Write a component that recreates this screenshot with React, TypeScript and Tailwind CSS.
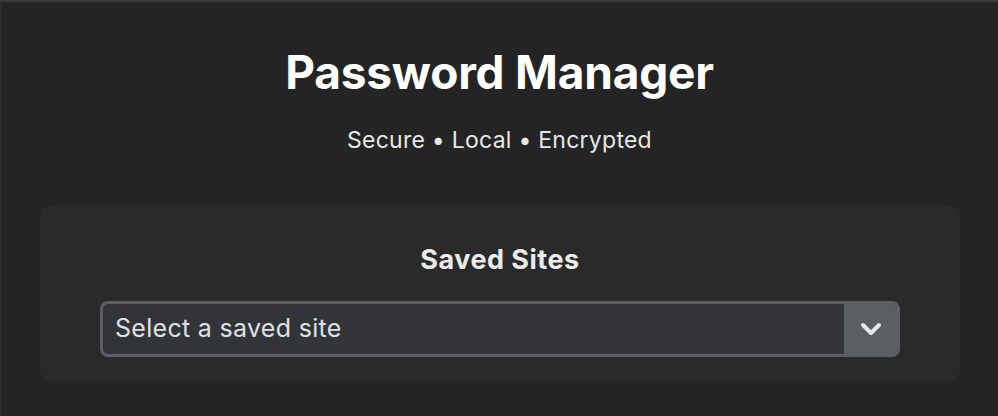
import React from "react";

const App: React.FC = () => {
  return (
    <div
      className="w-[998px] h-[416px] bg-[#242424] border-t-2 border-l border-t-[#3a3a3a] border-l-[#2e2e2e] overflow-hidden"
      style={{ fontFamily: "Inter, 'Noto Sans', sans-serif" }}
    >
      <div className="flex flex-col items-center pt-[46px]">
        <h1 className="text-[46px] leading-[48px] font-bold text-white tracking-[-0.2px]">
          Password Manager
        </h1>
        <p className="mt-[30px] text-[23px] leading-[28px] text-[#e8e8e8] tracking-[0.25px]">
          Secure • Local • Encrypted
        </p>
      </div>

      {/* Saved sites card */}
      <div className="ml-[39px] w-[920px] mt-[51px] h-[176px] rounded-xl bg-[#2a2a2a] flex flex-col items-center pt-[39px]">
        <h2 className="text-[27px] leading-[32px] font-bold text-[#ececec] tracking-[0.5px]">
          Saved Sites
        </h2>
        <div className="mt-[25px] w-[800px] h-[56px] flex rounded-lg border-[3px] border-[#5b5f64] bg-[#333437] overflow-hidden">
          <div className="flex-1 flex items-center px-[12px] text-[25px] text-[#dde1e7] tracking-[0.3px]">
            Select a saved site
          </div>
          <div className="w-[53px] bg-[#5b5f64] flex items-center justify-center">
            <svg width="24" height="16" viewBox="0 0 24 16" fill="none">
              <path
                d="M4 4l8 8 8-8"
                stroke="#e4e7ee"
                strokeWidth="4"
                strokeLinecap="round"
                strokeLinejoin="round"
              />
            </svg>
          </div>
        </div>
      </div>
    </div>
  );
};

export default App;
